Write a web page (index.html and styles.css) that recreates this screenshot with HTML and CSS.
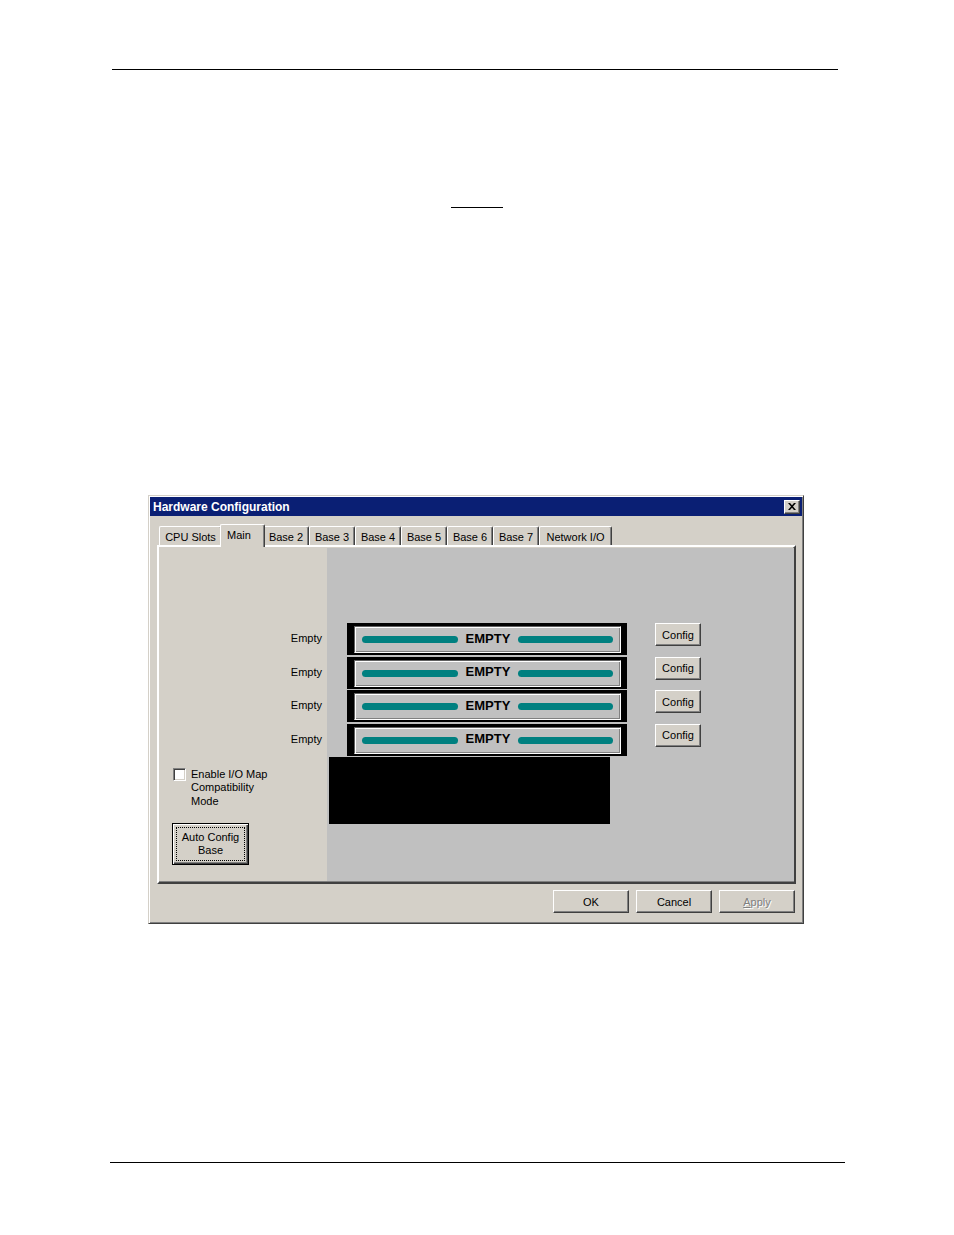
FILE: index.html
```html
<!DOCTYPE html>
<html>
<head>
<meta charset="utf-8">
<link rel="stylesheet" href="styles.css">
</head>
<body>
<div class="page">
  <div class="rule-top"></div>
  <div class="short-rule"></div>

  <div class="dialog">
    <div class="titlebar">
      <span class="title">Hardware Configuration</span>
      <span class="close-btn">
        <svg width="8" height="7" viewBox="0 0 8 7"><path d="M0 0h2l2 2.2L6 0h2L5 3.5 8 7H6L4 4.8 2 7H0l3-3.5z" fill="#000"/></svg>
      </span>
    </div>

    <div class="tabs">
      <div class="tab w-cpu">CPU Slots</div>
      <div class="tab tab-sel">Main</div>
      <div class="tab w-base">Base 2</div>
      <div class="tab w-base">Base 3</div>
      <div class="tab w-base">Base 4</div>
      <div class="tab w-base">Base 5</div>
      <div class="tab w-base">Base 6</div>
      <div class="tab w-base">Base 7</div>
      <div class="tab w-net">Network I/O</div>
    </div>

    <div class="panel">
      <div class="left-col">
        <div class="slot-label">Empty</div>
        <div class="slot-label">Empty</div>
        <div class="slot-label">Empty</div>
        <div class="slot-label">Empty</div>

        <div class="check-row">
          <span class="checkbox"></span>
          <span class="check-text">Enable I/O Map<br>Compatibility<br>Mode</span>
        </div>

        <div class="btn btn-default auto-btn">
          <span class="focus">Auto Config<br>Base</span>
        </div>
      </div>

      <div class="right-col">
        <div class="slot-row">
          <div class="slot"><div class="slot-inner"><span class="bar bar-l"></span><span class="slot-text">EMPTY</span><span class="bar bar-r"></span></div></div>
          <div class="btn config-btn">Config</div>
        </div>
        <div class="slot-row">
          <div class="slot"><div class="slot-inner"><span class="bar bar-l"></span><span class="slot-text">EMPTY</span><span class="bar bar-r"></span></div></div>
          <div class="btn config-btn">Config</div>
        </div>
        <div class="slot-row">
          <div class="slot"><div class="slot-inner"><span class="bar bar-l"></span><span class="slot-text">EMPTY</span><span class="bar bar-r"></span></div></div>
          <div class="btn config-btn">Config</div>
        </div>
        <div class="slot-row">
          <div class="slot"><div class="slot-inner"><span class="bar bar-l"></span><span class="slot-text">EMPTY</span><span class="bar bar-r"></span></div></div>
          <div class="btn config-btn">Config</div>
        </div>
        <div class="black-box"></div>
      </div>
    </div>

    <div class="button-row">
      <div class="btn dlg-btn">OK</div>
      <div class="btn dlg-btn">Cancel</div>
      <div class="btn dlg-btn disabled"><u>A</u>pply</div>
    </div>
  </div>

  <div class="rule-bottom"></div>
</div>
</body>
</html>
```

FILE: styles.css
```css
html, body {
  margin: 0;
  padding: 0;
  background: #ffffff;
}

.page {
  width: 954px;
  height: 1235px;
  overflow: hidden;
  font-family: "Liberation Sans", Arial, sans-serif;
  font-size: 11px;
  color: #000;
}

.rule-top {
  margin-top: 69px;
  margin-left: 112px;
  width: 726px;
  height: 1px;
  background: #000;
}

.short-rule {
  margin-top: 137px;
  margin-left: 451px;
  width: 52px;
  height: 1px;
  background: #000;
}

.dialog {
  margin-top: 287px;
  margin-left: 148px;
  width: 656px;
  height: 429px;
  box-sizing: border-box;
  background: #d4d0c8;
  border: 1px solid;
  border-color: #d4d0c8 #404040 #404040 #d4d0c8;
  box-shadow: inset 1px 1px #ffffff, inset -1px -1px #808080;
  padding: 1px;
}

.titlebar {
  height: 19px;
  background: #0a1f74;
  display: flex;
  align-items: center;
  justify-content: space-between;
  padding: 0 2px 0 3px;
}

.title {
  color: #fff;
  font-weight: bold;
  font-size: 12px;
  line-height: 19px;
  padding-top: 2px;
}

.close-btn {
  width: 16px;
  height: 14px;
  box-sizing: border-box;
  background: #d4d0c8;
  border: 1px solid;
  border-color: #ffffff #404040 #404040 #ffffff;
  box-shadow: inset -1px -1px #808080;
  display: flex;
  align-items: center;
  justify-content: center;
  padding-right: 1px;
}

.tabs {
  margin-top: 8px;
  margin-left: 9px;
  height: 21px;
  display: flex;
  align-items: flex-end;
}

.tab {
  height: 19px;
  box-sizing: border-box;
  border-top: 1px solid #ffffff;
  border-left: 1px solid #ffffff;
  border-right: 1px solid #404040;
  box-shadow: inset -1px 0 #808080;
  border-radius: 2px 2px 0 0;
  text-align: center;
  line-height: 14px;
  padding-top: 3px;
  white-space: nowrap;
}

.w-cpu { width: 63px; }
.w-base { width: 46px; }
.w-net { width: 73px; }

.tab-sel {
  position: relative;
  z-index: 2;
  width: 45px;
  height: 23px;
  margin: 0 -2px -2px -2px;
  background: #d4d0c8;
  padding-top: 3px;
  padding-left: 6px;
  text-align: left;
}

.panel {
  margin-left: 7px;
  width: 639px;
  height: 339px;
  box-sizing: border-box;
  border: 2px solid;
  border-color: #ffffff #404040 #404040 #ffffff;
  box-shadow: inset -1px -1px #808080;
  display: flex;
  position: relative;
  z-index: 1;
}

.left-col {
  width: 168px;
  flex: none;
  box-sizing: border-box;
  padding-top: 75px;
}

.slot-label {
  height: 32px;
  margin-bottom: 1.67px;
  line-height: 32px;
  text-align: right;
  padding-right: 5px;
}

.check-row {
  display: flex;
  align-items: flex-start;
  margin-top: 13px;
  margin-left: 14px;
}

.checkbox {
  width: 13px;
  height: 13px;
  box-sizing: border-box;
  flex: none;
  background: #fff;
  border: 1px solid;
  border-color: #808080 #ffffff #ffffff #808080;
  box-shadow: inset 1px 1px #404040, inset -1px -1px #d4d0c8;
  margin-top: 0;
}

.check-text {
  margin-left: 5px;
  line-height: 13.5px;
}

.btn {
  background: #d4d0c8;
  box-sizing: border-box;
  border: 1px solid;
  border-color: #ffffff #404040 #404040 #ffffff;
  box-shadow: inset -1px -1px #808080;
  display: flex;
  align-items: center;
  justify-content: center;
  text-align: center;
}

.btn-default {
  border: 1px solid #000;
  box-shadow: inset 1px 1px #ffffff, inset -1px -1px #404040, inset -2px -2px #808080;
}

.auto-btn {
  margin-top: 15px;
  margin-left: 13px;
  width: 77px;
  height: 42px;
  padding: 3px;
}

.focus {
  width: 100%;
  height: 100%;
  box-sizing: border-box;
  border: 1px dotted #000;
  display: flex;
  align-items: center;
  justify-content: center;
  line-height: 13px;
}

.right-col {
  flex: 1;
  background: #c0c0c0;
  padding-top: 75px;
  margin-top: 1px;
  margin-bottom: 1px;
  box-sizing: border-box;
}

.slot-row {
  display: flex;
  align-items: flex-start;
  height: 32px;
  margin-bottom: 1.67px;
}

.slot {
  margin-left: 20px;
  width: 280px;
  height: 32px;
  box-sizing: border-box;
  background: #000;
  padding: 3px 6px 2px 7px;
}

.slot-inner {
  height: 100%;
  box-sizing: border-box;
  background: #c0c0c0;
  border: 1px solid;
  border-color: #606060 #ffffff #ffffff #606060;
  box-shadow: inset 1px 1px #ffffff, inset -1px -1px #808080;
  display: flex;
  align-items: center;
  justify-content: center;
  gap: 7px;
}

.bar {
  height: 7px;
  background: #008080;
  border-radius: 4px;
  flex: none;
}

.bar-l { width: 96px; }
.bar-r { width: 95px; }

.slot-text {
  width: 46px;
  text-align: center;
  font-weight: bold;
  font-size: 13px;
  line-height: 14px;
  padding-bottom: 2px;
  color: #000;
}

.config-btn {
  margin-left: 28px;
  margin-top: 0;
  width: 46px;
  height: 23px;
}

.black-box {
  margin-left: 2px;
  margin-top: -0.67px;
  width: 281px;
  height: 67px;
  background: #000;
}

.button-row {
  margin-top: 6px;
  padding-right: 7px;
  display: flex;
  justify-content: flex-end;
  gap: 7px;
}

.dlg-btn {
  width: 76px;
  height: 23px;
}

.disabled {
  color: #808080;
  text-shadow: 1px 1px #ffffff;
}

.rule-bottom {
  margin-top: 238px;
  margin-left: 110px;
  width: 735px;
  height: 1px;
  background: #000;
}
```
